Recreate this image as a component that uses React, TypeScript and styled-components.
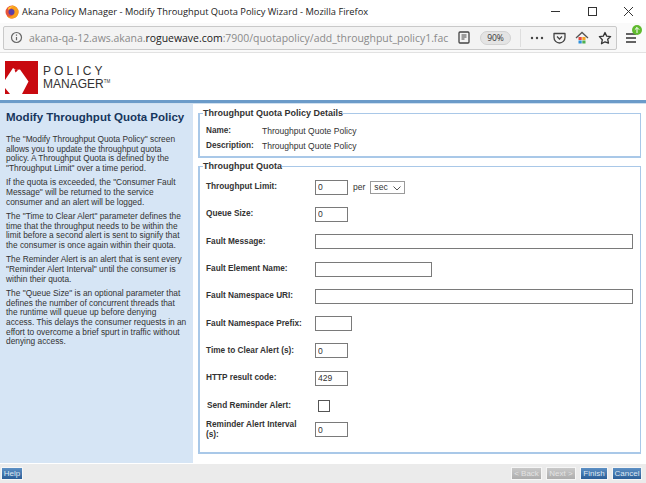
import React from "react";
import styled, { createGlobalStyle } from "styled-components";

const Global = createGlobalStyle`
  html, body { margin: 0; padding: 0; background: #fff; }
  body { font-family: "Liberation Sans", Arial, sans-serif; }
`;

const Page = styled.div`
  width: 646px; height: 483px; display: flex; flex-direction: column; overflow: hidden; background: #fff;
`;
const TitleBar = styled.div`
  height: 23px; flex: none; display: flex; align-items: center; font-family: "Open Sans", "Noto Sans", sans-serif;
  font-size: 9.3px; color: #222; padding-left: 5px;
`;
const TitleText = styled.span` margin-left: 3px; flex: 1; white-space: nowrap; `;
const WinButtons = styled.div`
  display: flex; width: 96px; flex: none; justify-content: space-between; padding-right: 12px; box-sizing: border-box;
  align-items: center;
`;
const Toolbar = styled.div`
  height: 30px; flex: none; box-sizing: border-box; display: flex; align-items: center; padding: 3px 4px 3px 3px;
  border-bottom: 1px solid #e2e2e2; background: #fafafa;
`;
const UrlBox = styled.div`
  width: 614px; height: 24px; box-sizing: border-box; flex: none; border: 1px solid #c9c9c9; border-radius: 2px; background: #f3f3f3;
  display: flex; align-items: center; padding-left: 6px; font-family: "Open Sans", "Noto Sans", sans-serif; font-size: 10.45px; color: #8a8a8a;
`;
const UrlText = styled.span` margin-left: 6px; width: 429px; white-space: nowrap; flex: none; b { font-weight: 400; color: #222; } `;
const ZoomPill = styled.span`
  margin-left: 10px; width: 31px; height: 14px; border-radius: 7px; background: #e4e4e4; border: 1px solid #d2d2d2; box-sizing: border-box;
  display: flex; align-items: center; justify-content: center; font-size: 8.5px; color: #333; flex: none;
`;
const Divider = styled.span` width: 1px; height: 18px; background: #dedede; margin: 0 9px 0 9px; flex: none; `;
const ToolIcons = styled.div` display: flex; align-items: center; gap: 9px; `;
const Burger = styled.div` position: relative; margin-left: 3px; width: 22px; height: 24px; display: flex; align-items: center; justify-content: center; flex: none; `;
const Badge = styled.svg` position: absolute; right: 0; top: -1px; `;

const Brand = styled.div`
  height: 47px; flex: none; display: flex; align-items: center; padding: 1px 0 0 5px; box-sizing: border-box; gap: 5px;
`;
const BrandText = styled.div` display: flex; flex-direction: column; color: #333; font-size: 12px; line-height: 12.5px; margin-top: 1px; `;
const BrandTop = styled.span` letter-spacing: 3.1px; `;
const BrandBottom = styled.span` sup { font-size: 4.5px; vertical-align: 5px; line-height: 0; } `;
const BlueBar = styled.div` height: 3px; flex: none; background: #6b9bc9; border-bottom: 1px solid #cfe0f0; `;

const Main = styled.div` flex: 1; min-height: 0; display: flex; `;
const Side = styled.aside`
  width: 193px; flex: none; box-sizing: border-box; background: #d6e5f5; padding: 5px 0 0 6px; color: #333; font-size: 8.35px; line-height: 9.7px; white-space: nowrap;
`;
const SideTitle = styled.h1` margin: 0 0 10px; color: #17365d; font-size: 11.5px; line-height: 16px; font-weight: 700; `;
const SideP = styled.p` margin: 0 0 4.5px; `;

const Content = styled.div` flex: 1; padding: 3px 5px 9px 5px; display: flex; flex-direction: column; min-width: 0; `;
const Group = styled.fieldset<{ $grow?: boolean }>`
  margin: 0; padding: 0 0 0 6px; border: 1px solid #a9c8e8; border-width: 1px 1px 2px 2px; min-width: 0;
  ${(p) => (p.$grow ? "flex: 1; margin-top: 2px;" : "height: 51px; box-sizing: border-box; flex: none;")}
  legend { padding: 0; margin-left: -3px; font-size: 9px; line-height: 12px; font-weight: 700; color: #333; }
`;
const DetailRow = styled.div<{ $first?: boolean }>`
  display: flex; font-size: 8.55px; line-height: 10px; color: #333; margin-top: ${(p) => (p.$first ? 7 : 5)}px; height: 10px;
`;
const DetailLabel = styled.span` width: 56px; font-size: 8.2px; font-weight: 700; flex: none; `;
const Rows = styled.div` display: flex; flex-direction: column; margin-top: 1.5px; `;
const Row = styled.div<{ $h?: number }>`
  display: flex; align-items: center; height: ${(p) => p.$h ?? 27.3}px; font-size: 8.55px; line-height: 10px; color: #333;
`;
const Label = styled.label<{ $inset?: boolean }>`
  width: ${(p) => (p.$inset ? 108 : 109)}px; margin-left: ${(p) => (p.$inset ? 1 : 0)}px; padding-right: 9px; box-sizing: border-box; flex: none; font-size: 8.25px; font-weight: 700;
`;
const Field = styled.input<{ $w: number }>`
  width: ${(p) => p.$w}px; height: 15px; box-sizing: border-box; border: 1px solid #7a7a7a; border-radius: 0; padding: 0 2px; margin: 0;
  font: 8.55px "Liberation Sans", Arial, sans-serif; color: #333; background: #fff; outline: none; flex: none;
`;
const Per = styled.span` margin: 0 5px 0 5px; `;
const FakeSelect = styled.div`
  width: 35px; height: 13px; box-sizing: border-box; border: 1px solid #9a9a9a; display: flex; align-items: center; justify-content: space-between;
  padding: 0 3px; font-size: 8.55px; color: #333;
`;
const Check = styled.span` width: 10px; height: 10px; border: 1px solid #555; margin-left: 3px; display: block; flex: none; `;

const Footer = styled.div`
  height: 20px; flex: none; background: #ebebeb; border-top: 1px solid #fff; box-sizing: border-box; display: flex; align-items: center; padding: 0 4px 0 1px; justify-content: space-between;
`;
const Btn = styled.span<{ $off?: boolean; $w: number }>`
  width: ${(p) => p.$w}px; height: 11px; display: flex; align-items: center; justify-content: center; font-size: 8px;
  color: ${(p) => (p.$off ? "#e4e4e4" : "#dfe9f4")}; border: 1px solid #f6f6f6;
  background: ${(p) => (p.$off ? "linear-gradient(#c9c9c9,#adadad)" : "linear-gradient(#5d90c4,#2b5e97)")};
`;
const BtnGroup = styled.div` display: flex; gap: 4px; `;

const FirefoxLogo = () => (
  <svg width="14" height="14" viewBox="0 0 14 14">
    <circle cx="7" cy="7" r="6.5" fill="#e8553a" />
    <path d="M7 .5a6.5 6.5 0 0 1 6.5 6.5c0 3.600-2.900 6.500-6.500 6.500-2.200 0-4-1-5.200-2.600C3.500 12 6 12 7.600 10.600 9.400 9 9 6.400 7.400 5.400 7 3.500 7 2 7 .5z" fill="#f9a01c" />
    <circle cx="6.500" cy="7" r="3" fill="#5a3fa8" />
    <path d="M3 3c2-2 4-2 5-1.500-1 .5-1.500 1-1.600 2C5 3.500 4 4 3.600 5.500z" fill="#ffcb2e" />
  </svg>
);
const Minimize = () => (<svg width="11" height="11" viewBox="0 0 11 11"><path d="M1 5.500h9" stroke="#333" strokeWidth="1" /></svg>);
const Maximize = () => (<svg width="11" height="11" viewBox="0 0 11 11"><rect x="1.500" y="1.500" width="8" height="8" fill="none" stroke="#333" /></svg>);
const Close = () => (<svg width="11" height="11" viewBox="0 0 11 11"><path d="M1 1l9 9M10 1l-9 9" stroke="#333" /></svg>);
const Info = () => (<svg width="13" height="13" viewBox="0 0 13 13"><circle cx="6.500" cy="6.500" r="5" fill="none" stroke="#666" strokeWidth="1.200" /><path d="M6.500 6v3.200M6.500 3.600v1.200" stroke="#666" strokeWidth="1.200" /></svg>);
const Reader = () => (<svg width="12" height="13" viewBox="0 0 12 13" style={{ flex: "none" }}><rect x="1" y="1" width="10" height="11" rx="1" fill="none" stroke="#444" strokeWidth="1.300" /><path d="M3.500 4h5M3.500 6h5M3.500 8h3" stroke="#444" /></svg>);
const Dots = () => (<svg width="14" height="4" viewBox="0 0 14 4"><circle cx="2" cy="2" r="1.200" fill="#444" /><circle cx="7" cy="2" r="1.200" fill="#444" /><circle cx="12" cy="2" r="1.200" fill="#444" /></svg>);
const Pocket = () => (<svg width="13" height="13" viewBox="0 0 13 13"><path d="M1 2.500h11v4a5.500 5.500 0 0 1-11 0z" fill="none" stroke="#444" strokeWidth="1.300" strokeLinejoin="round" /><path d="M4 5.500l2.500 2.500L9 5.500" fill="none" stroke="#444" strokeWidth="1.300" /></svg>);
const HomeColor = () => (
  <svg width="14" height="14" viewBox="0 0 14 14">
    <path d="M1 7l6-5.500L13 7" fill="none" stroke="#555" strokeWidth="1.300" />
    <rect x="3.500" y="6" width="3.200" height="3" fill="#e8453c" /><rect x="7.300" y="6" width="3.200" height="3" fill="#f5a623" />
    <rect x="3.500" y="9.500" width="3.200" height="3" fill="#2d8fdc" /><rect x="7.300" y="9.500" width="3.200" height="3" fill="#4caf50" />
  </svg>
);
const Star = () => (<svg width="14" height="14" viewBox="0 0 14 14"><path d="M7 1.500l1.700 3.600 3.900.5-2.900 2.700.8 3.900L7 10.800l-3.500 1.900.8-3.900L1.400 5.600l3.900-.5z" fill="none" stroke="#333" strokeWidth="1.300" strokeLinejoin="round" /></svg>);
const BurgerIcon = () => (<svg width="11" height="10" viewBox="0 0 11 10"><path d="M0 1h10M0 5h10M0 9h10" stroke="#333" strokeWidth="1.300" /></svg>);
const Chevron = () => (<svg width="8" height="5" viewBox="0 0 8 5" style={{ marginTop: 3 }}><path d="M.5.500l3.500 3.500L7.500.500" fill="none" stroke="#555" /></svg>);
const LogoMark = () => (
  <svg width="33" height="33" viewBox="0 0 33 33" style={{ flex: "none" }}>
    <rect width="33" height="33" fill="#c8090f" />
    <path d="M0 19L8 7l3 2 4-.5 8.500 12L17 33H5l-5-6z" fill="#fff" />
    <path d="M9.500 8.500l1 3 2.500-2.200z" fill="#c8090f" />
  </svg>
);

export default function App() {
  return (
    <Page>
      <Global />
      <TitleBar>
        <FirefoxLogo />
        <TitleText>Akana Policy Manager - Modify Throughput Quota Policy Wizard - Mozilla Firefox</TitleText>
        <WinButtons><Minimize /><Maximize /><Close /></WinButtons>
      </TitleBar>
      <Toolbar>
        <UrlBox>
          <Info />
          <UrlText>akana-qa-12.aws.akana.<b>roguewave.com</b>:7900/quotapolicy/add_throughput_policy1.fac</UrlText>
          <Reader />
          <ZoomPill>90%</ZoomPill>
          <Divider />
          <ToolIcons><Dots /><Pocket /><HomeColor /><Star /></ToolIcons>
        </UrlBox>
        <Burger>
          <BurgerIcon />
          <Badge width="10" height="10" viewBox="0 0 10 10"><circle cx="5" cy="5" r="5" fill="#5fba2e" /><path d="M5 8V2.500M2.800 4.700L5 2.500l2.200 2.200" fill="none" stroke="#fff" /></Badge>
        </Burger>
      </Toolbar>
      <Brand>
        <LogoMark />
        <BrandText>
          <BrandTop>POLICY</BrandTop>
          <BrandBottom>MANAGER<sup>TM</sup></BrandBottom>
        </BrandText>
      </Brand>
      <BlueBar />
      <Main>
        <Side>
          <SideTitle>Modify Throughput Quota Policy</SideTitle>
          <SideP>The "Modify Throughput Quota Policy" screen<br />allows you to update the throughput quota<br />policy. A Throughput Quota is defined by the<br />"Throughput Limit" over a time period.</SideP>
          <SideP>If the quota is exceeded, the "Consumer Fault<br />Message" will be returned to the service<br />consumer and an alert will be logged.</SideP>
          <SideP>The "Time to Clear Alert" parameter defines the<br />time that the throughput needs to be within the<br />limit before a second alert is sent to signify that<br />the consumer is once again within their quota.</SideP>
          <SideP>The Reminder Alert is an alert that is sent every<br />"Reminder Alert Interval" until the consumer is<br />within their quota.</SideP>
          <SideP>The "Queue Size" is an optional parameter that<br />defines the number of concurrent threads that<br />the runtime will queue up before denying<br />access. This delays the consumer requests in an<br />effort to overcome a brief spurt in traffic without<br />denying access.</SideP>
        </Side>
        <Content>
          <Group>
            <legend>Throughput Quota Policy Details</legend>
            <DetailRow $first><DetailLabel>Name:</DetailLabel><span>Throughput Quote Policy</span></DetailRow>
            <DetailRow><DetailLabel>Description:</DetailLabel><span>Throughput Quote Policy</span></DetailRow>
          </Group>
          <Group $grow>
            <legend>Throughput Quota</legend>
            <Rows>
              <Row><Label>Throughput Limit:</Label><Field $w={33} defaultValue="0" /><Per>per</Per><FakeSelect>sec<Chevron /></FakeSelect></Row>
              <Row><Label>Queue Size:</Label><Field $w={33} defaultValue="0" /></Row>
              <Row><Label>Fault Message:</Label><Field $w={318} /></Row>
              <Row><Label>Fault Element Name:</Label><Field $w={117} /></Row>
              <Row><Label>Fault Namespace URI:</Label><Field $w={318} /></Row>
              <Row><Label>Fault Namespace Prefix:</Label><Field $w={37} /></Row>
              <Row><Label>Time to Clear Alert (s):</Label><Field $w={33} defaultValue="0" /></Row>
              <Row><Label>HTTP result code:</Label><Field $w={33} defaultValue="429" /></Row>
              <Row><Label $inset>Send Reminder Alert:</Label><Check /></Row>
              <Row $h={21}><Label>Reminder Alert Interval (s):</Label><Field $w={33} defaultValue="0" /></Row>
            </Rows>
          </Group>
        </Content>
      </Main>
      <Footer>
        <Btn $w={20}>Help</Btn>
        <BtnGroup>
          <Btn $off $w={29}>&lt; Back</Btn>
          <Btn $off $w={28}>Next &gt;</Btn>
          <Btn $w={26}>Finish</Btn>
          <Btn $w={28}>Cancel</Btn>
        </BtnGroup>
      </Footer>
    </Page>
  );
}
